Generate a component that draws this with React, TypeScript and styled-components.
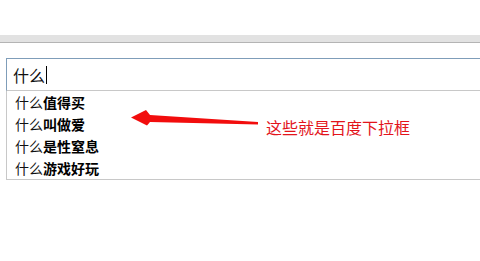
import React from "react";
import styled, { createGlobalStyle } from "styled-components";

const GlobalStyle = createGlobalStyle`
  html, body {
    margin: 0;
    padding: 0;
    background: #fff;
    overflow: hidden;
  }
  body {
    font-family: "Noto Sans CJK SC", "Noto Sans", sans-serif;
  }
`;

const Page = styled.div`
  position: relative;
  height: 261px;
  overflow: hidden;
`;

const TopGap = styled.div`
  height: 35px;
`;

const ChromeBar = styled.div`
  height: 7px;
  background: #e2e2e2;
  border-bottom: 1px solid #b4b4b4;
`;

const Content = styled.div`
  padding: 15px 0 0 6px;
  width: 800px;
`;

const SearchBox = styled.div`
  height: 33px;
  box-sizing: border-box;
  border-top: 1px solid #7f9db9;
  border-left: 1px solid #7f9db9;
  border-bottom: 1px solid #c8c8c8;
  display: flex;
  align-items: center;
  padding-left: 6px;
  font-size: 16px;
  color: #111;
`;

const Caret = styled.span`
  display: inline-block;
  width: 1px;
  height: 18px;
  background: #000;
  margin-left: 1px;
`;

const Dropdown = styled.ul`
  list-style: none;
  margin: 0;
  padding: 0;
  box-sizing: border-box;
  border-left: 1px solid #c8c8c8;
  border-bottom: 1px solid #c8c8c8;
`;

const Item = styled.li`
  height: 22px;
  line-height: 22px;
  padding-left: 8px;
  font-size: 14px;
  color: #111;
`;

const Suggest = styled.b`
  font-weight: 700;
  color: #000;
`;

const Arrow = styled.svg`
  position: absolute;
  left: 0;
  top: 0;
`;

const Note = styled.div`
  position: absolute;
  left: 266px;
  top: 117px;
  font-size: 16px;
  line-height: 20px;
  color: #e3141b;
  white-space: nowrap;
`;

const suggestions = ["值得买", "叫做爱", "是性窒息", "游戏好玩"];

export default function App() {
  return (
    <Page>
      <GlobalStyle />
      <TopGap />
      <ChromeBar />
      <Content>
        <SearchBox>
          什么
          <Caret />
        </SearchBox>
        <Dropdown>
          {suggestions.map((s) => (
            <Item key={s}>
              什么<Suggest>{s}</Suggest>
            </Item>
          ))}
        </Dropdown>
      </Content>
      <Arrow width="480" height="261" viewBox="0 0 480 261">
        <polygon
          points="131,117.5 146,110 150,115 258,122 258,124.5 150,122 147,125.5"
          fill="#f20d0d"
        />
      </Arrow>
      <Note>这些就是百度下拉框</Note>
    </Page>
  );
}
